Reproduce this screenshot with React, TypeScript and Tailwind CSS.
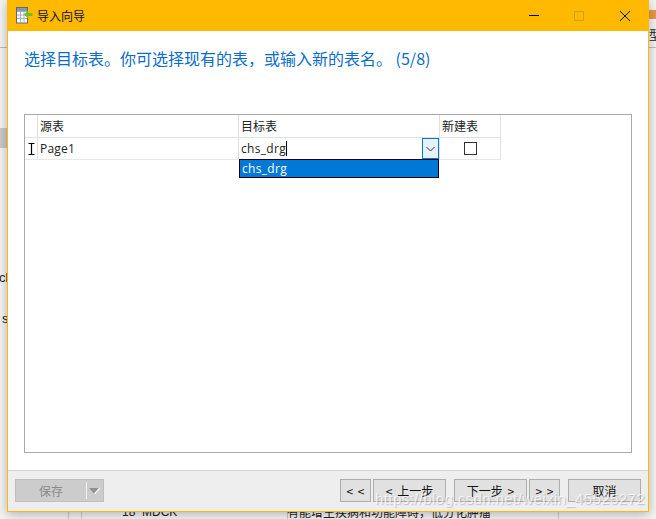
function Btn({ w, children, className = "" }: { w: string; children: React.ReactNode; className?: string }) {
  return (
    <div className={`${w} h-[23px] bg-[#e1e1e1] border border-[#adadad] flex items-center justify-center text-[12px] text-[#111] [word-spacing:2px] ${className}`}>
      {children}
    </div>
  );
}

export default function App() {
  return (
    <div className="relative w-[656px] h-[519px] overflow-hidden bg-[#f3f3f3] font-['Noto_Sans_CJK_SC',sans-serif]">
      {/* desktop content behind the dialog */}
      <div className="absolute left-0 top-[47px] w-[8px] h-px bg-[#bdbdbd]" />
      <div className="absolute left-0 top-[128px] w-[8px] h-[20px] bg-[#c9c9c9]" />
      <div className="absolute left-0 top-[271px] text-[13px] leading-[14px] text-[#222] font-['Liberation_Sans',sans-serif] -translate-x-[1px]">cl</div>
      <div className="absolute left-[2px] top-[312px] text-[13px] leading-[14px] text-[#222] font-['Liberation_Sans',sans-serif]">s</div>
      <div className="absolute left-[648px] top-[10px] w-[8px] h-[9px] bg-[#e69a4a]" />
      <div className="absolute left-[649px] top-[28px] text-[12px] leading-[13px] text-[#222]">型</div>
      <div className="absolute left-[649px] top-[47px] w-[7px] h-px bg-[#bdbdbd]" />
      <div className="absolute left-[68px] top-[512px] w-px h-[7px] bg-[#c8c8c8]" />
      <div className="absolute left-[81px] top-[512px] w-px h-[7px] bg-[#c8c8c8]" />
      <div className="absolute left-[287px] top-[512px] w-px h-[7px] bg-[#c8c8c8]" />
      <div className="absolute left-[558px] top-[512px] w-px h-[7px] bg-[#c8c8c8]" />
      <div className="absolute left-[122px] top-[505px] text-[12px] leading-[14px] text-[#222] font-['Liberation_Sans',sans-serif]">18&nbsp;&nbsp;MDCK</div>
      <div className="absolute left-[287px] top-[505px] text-[12px] leading-[14px] text-[#222]">有能增生疾病和功能障碍，低分化肿瘤</div>

      {/* dialog */}
      <div className="relative ml-[7px] w-[642px] h-[512px] flex flex-col border-x border-b border-[#ffb900] bg-white shadow-[0_2px_10px_rgba(0,0,0,0.28)]">
        <div className="h-[31px] shrink-0 bg-[#ffb900] flex items-center pl-[8px]">
          <svg width="17" height="17" viewBox="0 0 17 17" className="shrink-0">
            <rect x="0.5" y="0.5" width="11" height="15.5" fill="#fff" stroke="#5a6b7a" />
            <path d="M1 4.5H11M1 8H11M1 11.5H11M4.5 1V16M8 1V16" stroke="#a7b0ba" strokeWidth="1" fill="none" />
            <rect x="1" y="1" width="10" height="3" fill="#8a98a8" />
            <path d="M8 7.5 12 3.5V6H16.5V9H12V11.5Z" fill="#6fbf1f" />
          </svg>
          <span className="ml-[4px] text-[12px] text-[#111]">导入向导</span>
          <div className="ml-auto flex items-center">
            <div className="w-[10px] h-px bg-black" />
            <div className="ml-[35px] w-[10px] h-[10px] border border-[#d69e12]" />
            <svg width="10" height="10" viewBox="0 0 10 10" className="ml-[36px] mr-[18px]">
              <path d="M0 0 10 10M10 0 0 10" stroke="#111" strokeWidth="1" fill="none" />
            </svg>
          </div>
        </div>

        <div className="flex-1 min-h-0 flex flex-col px-[16px] bg-white">
          <div className="h-[83px] pt-[17px] shrink-0 text-[16px] leading-[20px] text-[#0a6cc9] whitespace-nowrap">
            选择目标表。你可选择现有的表，或输入新的表名。 (5/8)
          </div>
          <div className="relative h-[339px] shrink-0 border border-[#a8a8a8] bg-white text-[12px] text-[#222]">
            <div className="flex h-[23px] w-[476px] border-b border-[#e0e0e0]">
              <div className="w-[13px] border-r border-[#e0e0e0]" />
              <div className="w-[201px] border-r border-[#e0e0e0] pl-[2px] leading-[22px]">源表</div>
              <div className="w-[201px] border-r border-[#e0e0e0] pl-[2px] leading-[22px]">目标表</div>
              <div className="w-[61px] border-r border-[#e0e0e0] pl-[2px] leading-[22px]">新建表</div>
            </div>
            <div className="flex h-[22px] w-[476px] border-b border-[#e8e8e8]">
              <div className="w-[13px] border-r border-[#e0e0e0] flex items-center justify-center">
                <svg width="7" height="12" viewBox="0 0 7 12">
                  <path d="M0.5 0.5H6.5M3.5 0.5V11.5M0.5 11.5H6.5" stroke="#000" strokeWidth="1.2" fill="none" />
                </svg>
              </div>
              <div className="w-[201px] border-r border-[#e0e0e0] pl-[2px] leading-[21px] font-['Open_Sans',sans-serif] tracking-[0.2px]">Page1</div>
              <div className="relative w-[201px] border-r border-[#e0e0e0] pl-[2px] leading-[21px] font-['Open_Sans',sans-serif] tracking-[0.3px] flex items-start">
                <span>chs_drg</span>
                <span className="mt-[3px] w-px h-[15px] bg-black" />
                <div className="absolute right-0 top-0 w-[17px] h-[21px] border border-[#0078d7] bg-[#e5f1fb] flex items-center justify-center">
                  <svg width="9" height="6" viewBox="0 0 9 6">
                    <path d="M0.5 1 4.5 5 8.5 1" stroke="#333" strokeWidth="1" fill="none" />
                  </svg>
                </div>
                <div className="absolute left-0 top-[21px] z-10 w-[200px] h-[19px] bg-[#0078d7] border border-black text-white pl-[2px] leading-[17px]">chs_drg</div>
              </div>
              <div className="w-[61px] border-r border-[#e0e0e0] flex items-center justify-center">
                <div className="w-[13px] h-[13px] border border-[#333] bg-white" />
              </div>
            </div>
          </div>
          <div className="flex-1" />
        </div>

        <div className="h-[41px] shrink-0 bg-[#eeeeee] border-t border-[#d4d4d4] flex items-start pt-[8px] pl-[7px]">
          <div className="w-[89px] h-[23px] bg-[#cccccc] border border-[#bfbfbf] flex items-center text-[12px] text-[#8a8a8a]">
            <span className="w-[71px] text-center">保存</span>
            <div className="w-px h-[17px] bg-[#f2f2f2]" />
            <svg width="16" height="10" viewBox="0 0 16 10">
              <path d="M2 2H13L7.5 8Z" fill="#909090" />
              <path d="M7.5 8 13 2" stroke="#f5f5f5" strokeWidth="1.4" fill="none" />
            </svg>
          </div>
          <Btn w="w-[31px]" className="ml-[236px]">&lt; &lt;</Btn>
          <Btn w="w-[73px]" className="ml-[2px]">&lt; 上一步</Btn>
          <Btn w="w-[73px]" className="ml-[8px]">下一步 &gt;</Btn>
          <Btn w="w-[31px]" className="ml-[2px]">&gt; &gt;</Btn>
          <Btn w="w-[73px]" className="ml-[8px]">取消</Btn>
        </div>
      </div>

      {/* watermark over the screenshot */}
      <div className="absolute left-[375px] top-[490px] text-[15px] leading-[18px] tracking-[0.4px] text-white/70 [text-shadow:1px_1px_1px_rgba(120,120,120,0.4)] font-['Liberation_Sans',sans-serif] whitespace-nowrap">
        https://blog.csdn.net/weixin_45525272
      </div>
    </div>
  );
}
